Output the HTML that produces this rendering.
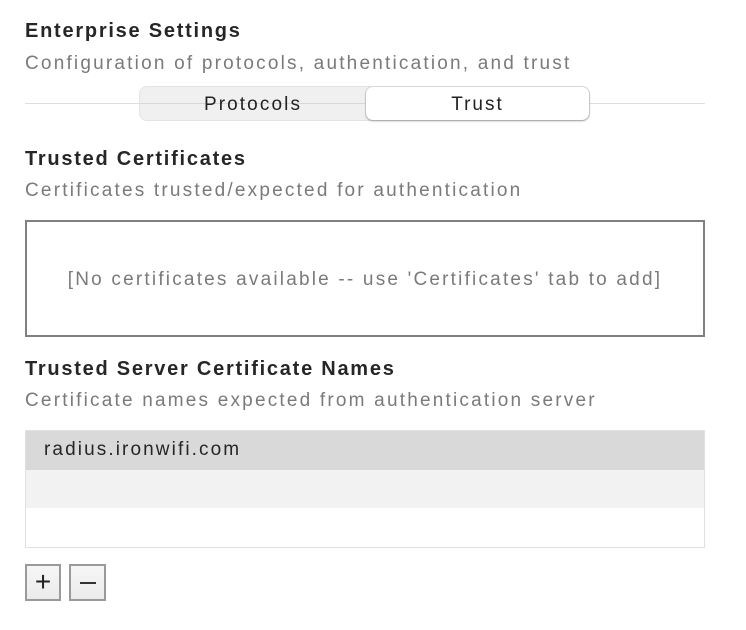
<!DOCTYPE html>
<html><head><style>
body{margin:0;width:746px;height:630px;background:#fff;font-family:"Liberation Sans",sans-serif;position:relative;overflow:hidden;color:#262626}
.a{position:absolute;white-space:nowrap}
.h{font-weight:bold;font-size:20px;color:#262626;letter-spacing:1.75px}
.s{font-size:19px;color:#7a7a7a;letter-spacing:2.2px}
</style></head><body>
<div class="a h" style="left:25px;top:20px">Enterprise Settings</div>
<div class="a s" style="left:25px;top:53px">Configuration of protocols, authentication, and trust</div>
<div class="a" style="left:25px;top:103px;width:680px;height:1px;background:#ddd"></div>
<div class="a" style="left:140px;top:87px;width:449px;height:33px;background:#f0f0f0;border-radius:7px;box-shadow:0 0 0 1px #e3e3e3"></div>
<div class="a" style="left:140px;top:103px;width:226px;height:1px;background:#d8d8d8"></div>
<div class="a" style="left:140px;top:94px;width:226px;text-align:center;font-size:19px;color:#222;letter-spacing:2.1px">Protocols</div>
<div class="a" style="left:366px;top:87px;width:223px;height:33px;background:#fff;border-radius:7px;box-shadow:0 1px 2px rgba(0,0,0,.3),0 0 0 1px #ddd;text-align:center;line-height:35px;font-size:19px;color:#222;letter-spacing:2px">Trust</div>
<div class="a h" style="left:25px;top:148px">Trusted Certificates</div>
<div class="a s" style="left:25px;top:180px">Certificates trusted/expected for authentication</div>
<div class="a" style="left:25px;top:220px;width:676px;height:113px;border:2px solid #808080;text-align:center;line-height:115px;font-size:19px;color:#7a7a7a;letter-spacing:2.2px">[No certificates available -- use 'Certificates' tab to add]</div>
<div class="a h" style="left:25px;top:358px">Trusted Server Certificate Names</div>
<div class="a s" style="left:25px;top:390px">Certificate names expected from authentication server</div>
<div class="a" style="left:25px;top:430px;width:678px;height:116px;border:1px solid #e0e0e0;background:#fff">
<div style="height:39px;background:#d9d9d9;font-size:19px;line-height:37px;padding-left:18px;color:#262626;letter-spacing:2.1px">radius.ironwifi.com</div>
<div style="height:38px;background:#f2f2f2"></div>
</div>
<div class="a" style="left:25px;top:564px;width:32px;height:33px;border:2px solid #9a9a9a;background:linear-gradient(#f6f6f6,#ebebeb);text-align:center;line-height:32px;font-size:28px;color:#222">+</div>
<div class="a" style="left:69px;top:564px;width:33px;height:33px;border:2px solid #9a9a9a;background:linear-gradient(#f6f6f6,#ebebeb)"><div style="position:absolute;left:9px;top:16px;width:16px;height:1.5px;background:#333"></div></div>
</body></html>
